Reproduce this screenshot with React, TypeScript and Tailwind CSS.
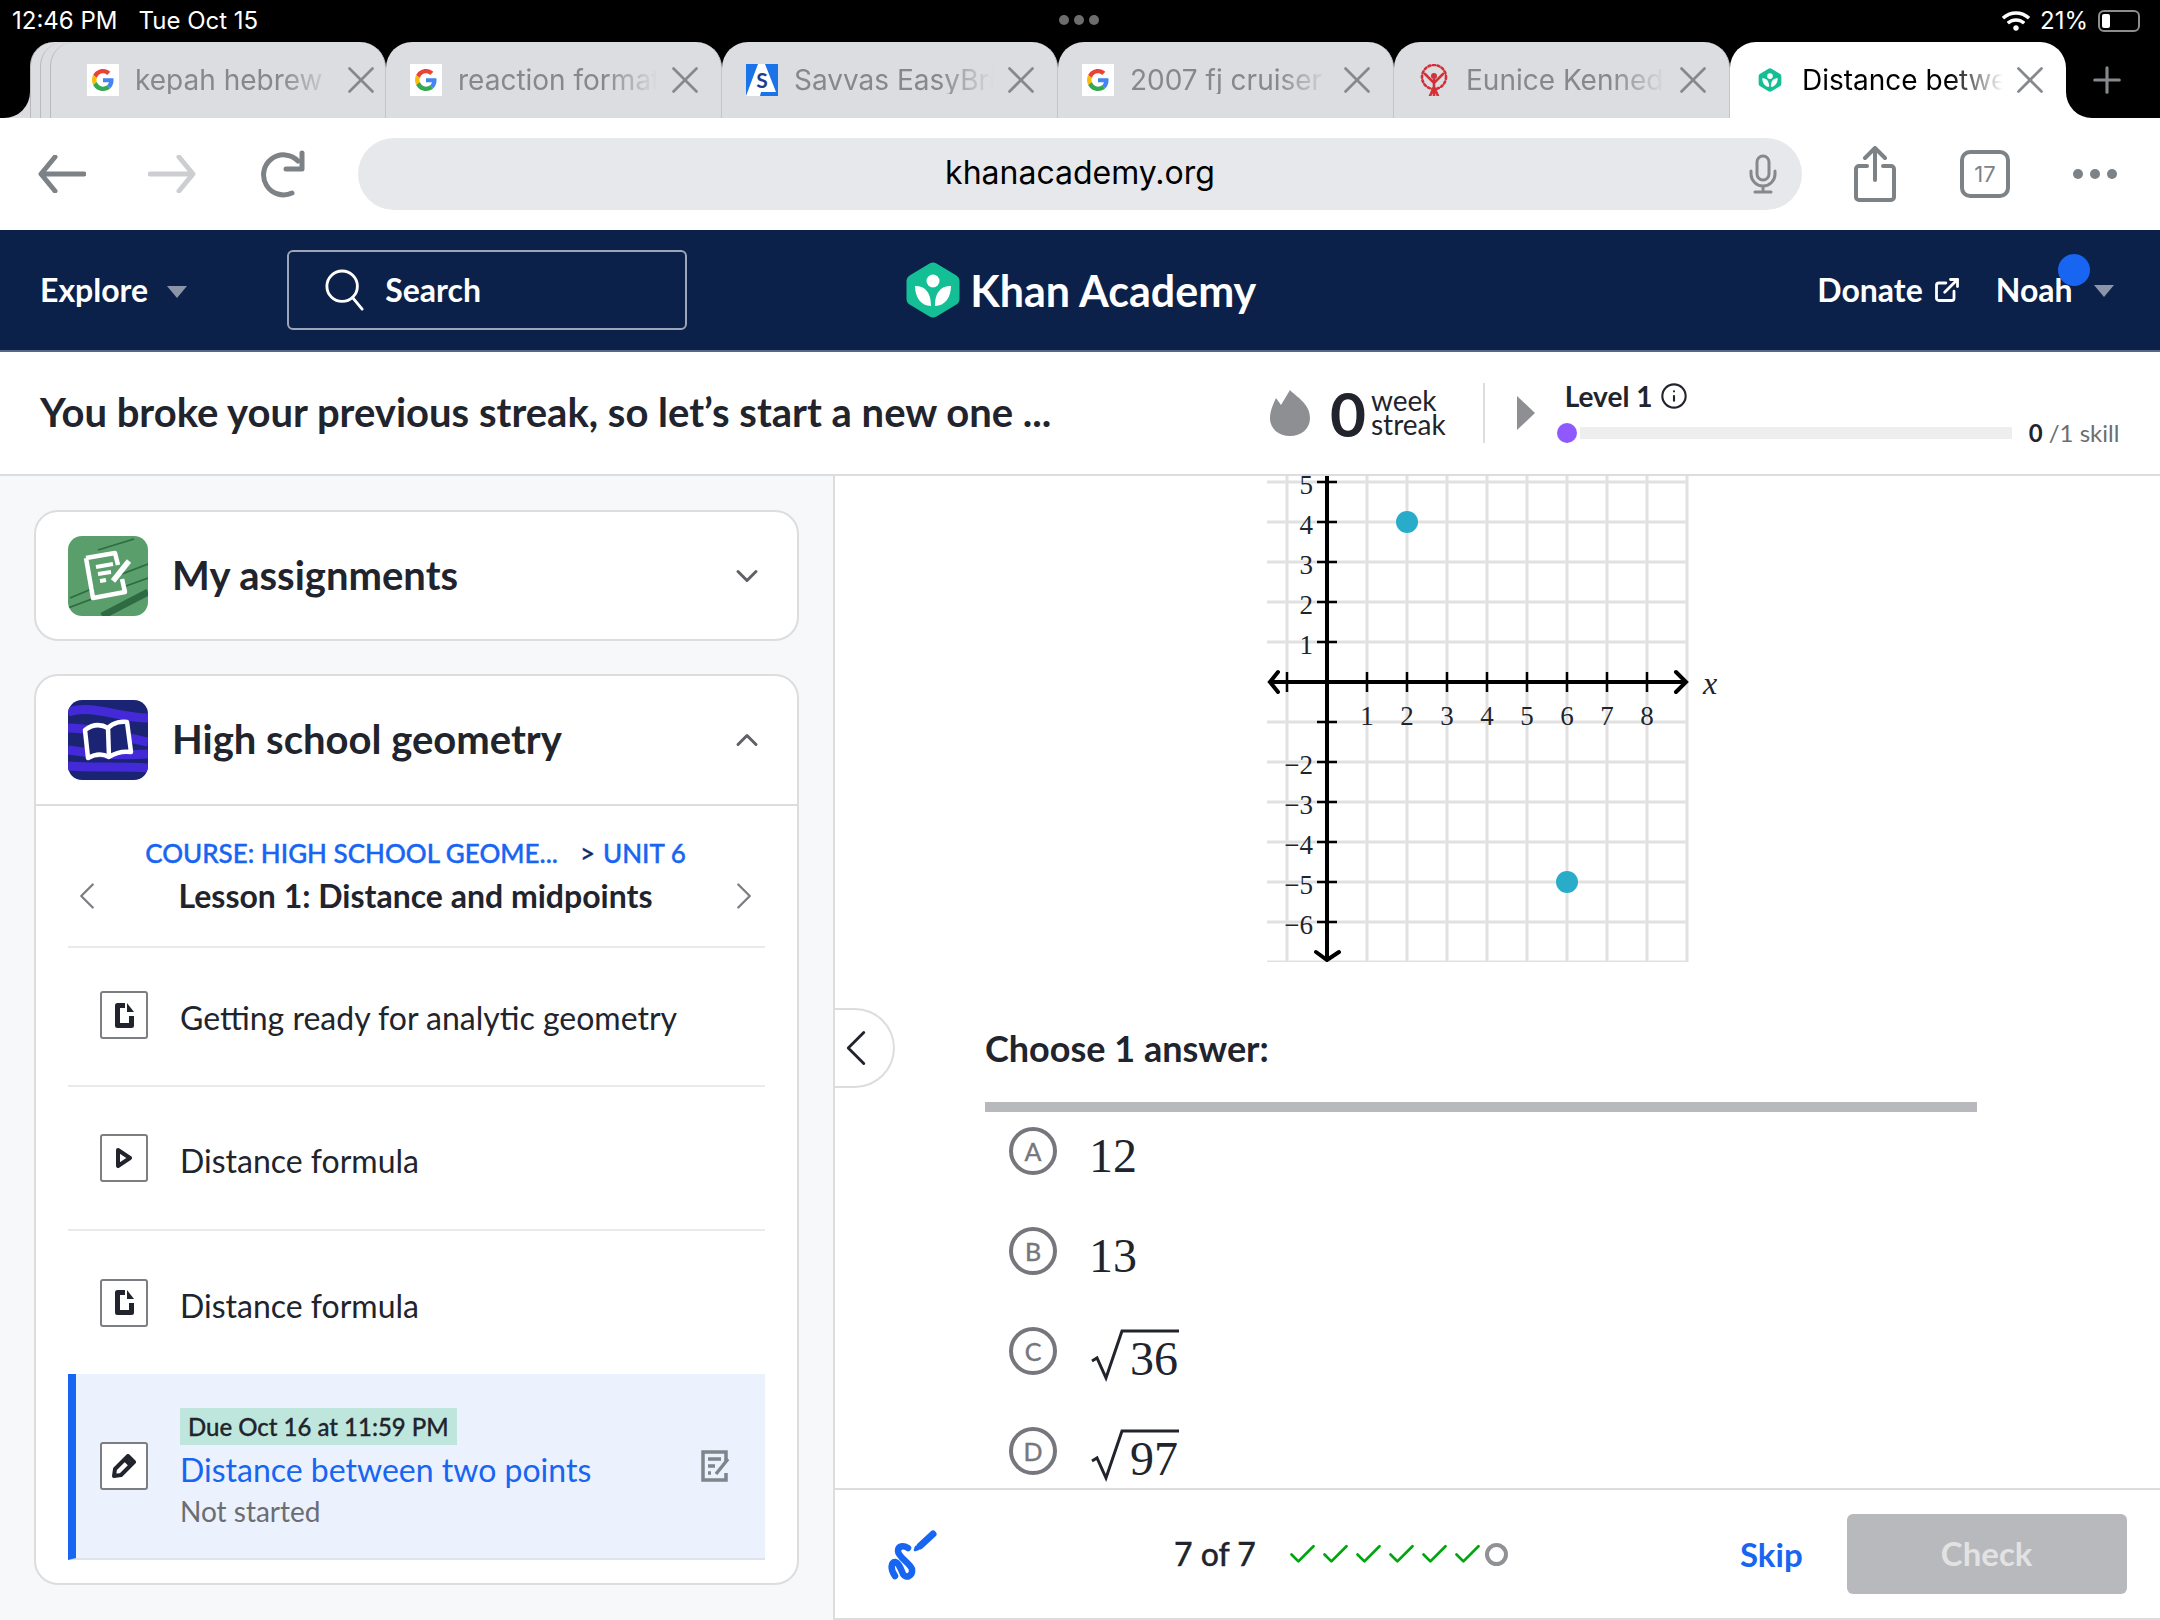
import { Check, ChevronDown, ChevronLeft, ChevronRight, ChevronUp, ExternalLink, Info, Plus, X } from "lucide-react";
import { FaWifi } from "react-icons/fa";

const tabs = [
  { title: "kepah hebrew - Google", icon: "google" },
  { title: "reaction format", icon: "google" },
  { title: "Savvas EasyBridge", icon: "savvas" },
  { title: "2007 fj cruiser", icon: "google" },
  { title: "Eunice Kennedy", icon: "olympics" },
  { title: "Distance between", icon: "khan", active: true },
];

const GoogleIcon = () => (
  <div className="flex h-8 w-8 shrink-0 items-center justify-center bg-white">
    <svg viewBox="0 0 48 48" className="h-[22px] w-[22px]">
      <path fill="#EA4335" d="M24 9.5c3.54 0 6.71 1.22 9.21 3.6l6.85-6.85C35.9 2.38 30.47 0 24 0 14.62 0 6.51 5.38 2.56 13.22l7.98 6.19C12.43 13.72 17.74 9.5 24 9.5z" />
      <path fill="#4285F4" d="M46.98 24.55c0-1.57-.15-3.09-.38-4.55H24v9.02h12.94c-.58 2.96-2.26 5.48-4.78 7.18l7.73 6c4.51-4.18 7.09-10.36 7.09-17.65z" />
      <path fill="#FBBC05" d="M10.53 28.59c-.48-1.45-.76-2.99-.76-4.59s.27-3.14.76-4.59l-7.98-6.19C.92 16.46 0 20.12 0 24c0 3.88.92 7.54 2.56 10.78l7.97-6.19z" />
      <path fill="#34A853" d="M24 48c6.48 0 11.93-2.13 15.89-5.81l-7.73-6c-2.15 1.45-4.92 2.3-8.16 2.3-6.26 0-11.57-4.22-13.47-9.91l-7.98 6.19C6.51 42.62 14.62 48 24 48z" />
    </svg>
  </div>
);

const SavvasIcon = () => (
  <svg viewBox="0 0 32 32" className="h-8 w-8 shrink-0">
    <rect width="32" height="32" fill="#1a73e8" />
    <path d="M12 0h7l11 28H15l-1 4H0z" fill="#fff" />
    <text x="16" y="24" textAnchor="middle" fontSize="21" fontWeight="700" fontFamily="'Lato', sans-serif" fill="#1c3d8f">
      S
    </text>
  </svg>
);

const OlympicsIcon = () => (
  <svg viewBox="0 0 32 32" className="h-8 w-8 shrink-0" fill="none" stroke="#d2303a" strokeLinecap="round">
    <circle cx="16" cy="12" r="3" fill="#d2303a" stroke="none" />
    <path strokeWidth="2.6" d="M7 10l9 9 9-9M16 16v16M12 32l4-9 4 9" />
    <circle cx="16" cy="13" r="12" strokeWidth="2.6" strokeDasharray="2 2.6" />
  </svg>
);

const KhanLogo = ({ className }: { className: string }) => (
  <svg viewBox="0 0 54 56" className={className}>
    <path d="M23.5 1.6a7 7 0 0 1 7 0l19.5 11.6a7 7 0 0 1 3.5 6v17.6a7 7 0 0 1-3.5 6L30.5 54.4a7 7 0 0 1-7 0L4 42.800a7 7 0 0 1-3.500-6V19.200a7 7 0 0 1 3.500-6z" fill="#14bf96" />
    <circle cx="27" cy="19" r="6.500" fill="#fff" />
    <path d="M9 24c9 0 16 5 16 20C15 44 9 35 9 24zM45 24c-9 0-16 5-16 20 10 0 16-9 16-20z" fill="#fff" />
  </svg>
);

const Favicon = ({ name }: { name: string }) => {
  if (name === "google") return <GoogleIcon />;
  if (name === "savvas") return <SavvasIcon />;
  if (name === "olympics") return <OlympicsIcon />;
  return (
    <div className="flex h-8 w-8 shrink-0 items-center justify-center">
      <KhanLogo className="h-6 w-6" />
    </div>
  );
};

const Tab = ({ title, icon, active, first }: { title: string; icon: string; active?: boolean; first?: boolean }) => (
  <div
    className={`relative flex h-full items-center rounded-t-[26px] ${first ? "w-[326px] pl-[27px] pr-[1px]" : "w-[336px] pl-[24px] pr-[13px]"} ${
      active ? "bg-white" : "border-r border-[#c3c4c8] bg-[#dcdde0]"
    }`}
  >
    <Favicon name={icon} />
    <span
      className={`ml-[16px] flex-1 overflow-hidden whitespace-nowrap text-[28px] leading-none [mask-image:linear-gradient(to_right,black_72%,transparent_98%)] ${
        active ? "text-black" : "text-[#85888d]"
      }`}
    >
      {title}
    </span>
    <X className="h-[46px] w-[46px] shrink-0 text-[#85888d]" strokeWidth={1.4} />
    {active && (
      <div className="absolute bottom-0 left-full h-[26px] w-[26px] bg-white">
        <div className="h-full w-full rounded-bl-[26px] bg-black" />
      </div>
    )}
  </div>
);

const BrowserChrome = () => (
  <div className="shrink-0 font-['Inter',sans-serif]">
    <div className="relative flex h-[42px] items-center justify-between bg-black pl-[12px] pr-[20px] text-[24px] text-white">
      <div className="flex gap-[21px]">
        <span>12:46 PM</span>
        <span>Tue Oct 15</span>
      </div>
      <div className="absolute left-[1059px] top-[15px] flex gap-[5px]">
        <div className="h-[10px] w-[10px] rounded-full bg-[#6d6d6d]" />
        <div className="h-[10px] w-[10px] rounded-full bg-[#6d6d6d]" />
        <div className="h-[10px] w-[10px] rounded-full bg-[#6d6d6d]" />
      </div>
      <div className="flex items-center gap-[10px]">
        <FaWifi className="h-[24px] w-[28px]" />
        <span>21%</span>
        <div className="flex h-[22px] w-[42px] items-center rounded-[6px] border-2 border-[#8d8d8d] p-[2px]">
          <div className="h-full w-[8px] rounded-[2px] bg-white" />
        </div>
      </div>
    </div>
    <div className="flex h-[76px] bg-black pl-[60px]">
      <div className="relative">
        <div className="absolute bottom-0 left-[-30px] top-0 w-[70px] rounded-tl-[24px] border-l border-[#b9babd] bg-[#dcdde0]" />
        <div className="absolute bottom-0 left-[-20px] top-0 w-[60px] rounded-tl-[24px] border-l border-[#b9babd] bg-[#dcdde0]" />
        <div className="absolute bottom-0 left-[-10px] top-0 w-[50px] rounded-tl-[24px] border-l border-[#b9babd] bg-[#dcdde0]" />
        <div className="absolute bottom-0 left-[-56px] h-[26px] w-[26px] bg-[#dcdde0]">
          <div className="h-full w-full rounded-br-[26px] bg-black" />
        </div>
      </div>
      <div className="relative flex h-full">
        {tabs.map((t, i) => (
          <Tab key={t.title} title={t.title} icon={t.icon} active={t.active} first={i === 0} />
        ))}
      </div>
      <Plus className="ml-[20px] mt-[17px] h-[42px] w-[42px] text-[#85888d]" strokeWidth={1.8} />
    </div>
    <div className="flex h-[112px] items-center bg-white pl-[38px]">
      <svg viewBox="0 0 48 38" className="h-[38px] w-[48px]" fill="none" stroke="#7d8287" strokeWidth="5" strokeLinecap="round" strokeLinejoin="round">
        <path d="M46 19H4M17 2L3 19l14 17" />
      </svg>
      <svg viewBox="0 0 48 38" className="ml-[62px] h-[38px] w-[48px]" fill="none" stroke="#ccced1" strokeWidth="5" strokeLinecap="round" strokeLinejoin="round">
        <path d="M2 19h42M31 2l14 17-14 17" />
      </svg>
      <svg viewBox="0 0 46 48" className="ml-[64px] h-[48px] w-[46px]" fill="none" stroke="#7d8287" strokeWidth="5" strokeLinecap="round" strokeLinejoin="round">
        <path d="M38 11a20 20 0 1 0-6 32" />
        <path d="M42 3v16H26" />
      </svg>
      <div className="relative ml-[52px] flex h-[72px] w-[1444px] items-center justify-center rounded-[36px] bg-[#e6e8eb] pb-[3px] text-[32px] text-black">
        khanacademy.org
        <svg viewBox="0 0 30 40" className="absolute right-[24px] top-[16px] h-[40px] w-[30px]" fill="none" stroke="#85888d" strokeWidth="3" strokeLinecap="round">
          <rect x="9" y="2" width="12" height="24" rx="6" />
          <path d="M3 17v3a12 12 0 0 0 24 0v-3M15 32v6M7 38h16" />
        </svg>
      </div>
      <svg viewBox="0 0 42 56" className="ml-[52px] h-[56px] w-[42px]" fill="none" stroke="#7d8287" strokeWidth="4" strokeLinecap="round" strokeLinejoin="round">
        <path d="M21 34V3M11 12l10-10 10 10M13 20H5a3 3 0 0 0-3 3v28a3 3 0 0 0 3 3h32a3 3 0 0 0 3-3V23a3 3 0 0 0-3-3h-8" />
      </svg>
      <div className="ml-[64px] flex h-[48px] w-[50px] items-center justify-center rounded-[10px] border-4 border-[#7d8287] text-[22px] text-[#7d8287]">
        17
      </div>
      <div className="ml-[63px] flex gap-[7px]">
        <div className="h-[10px] w-[10px] rounded-full bg-[#7d8287]" />
        <div className="h-[10px] w-[10px] rounded-full bg-[#7d8287]" />
        <div className="h-[10px] w-[10px] rounded-full bg-[#7d8287]" />
      </div>
    </div>
  </div>
);

const Caret = ({ className }: { className: string }) => (
  <svg viewBox="0 0 22 14" className={className}>
    <path d="M1 1h20L11 13z" fill="#8b94a8" />
  </svg>
);

const TopNav = () => (
  <div className="relative flex h-[122px] shrink-0 items-center border-b-2 border-[#56678a] bg-[#0b2149] pl-[40px] text-[32px] font-bold text-white">
    <span>Explore</span>
    <Caret className="ml-[18px] mt-[4px] h-[14px] w-[22px]" />
    <div className="ml-[99px] flex h-[80px] w-[400px] items-center rounded-[6px] border-2 border-[#9da6b6] pl-[36px]">
      <svg viewBox="0 0 42 44" className="h-[44px] w-[40px]" fill="none" stroke="#fff" strokeWidth="3" strokeLinecap="round">
        <circle cx="18" cy="18" r="16" />
        <path d="M29 30l10 12" />
      </svg>
      <span className="ml-[20px]">Search</span>
    </div>
    <KhanLogo className="ml-[219px] h-[56px] w-[54px]" />
    <span className="ml-[10px] text-[43px] leading-none">Khan Academy</span>
    <span className="ml-[561px]">Donate</span>
    <ExternalLink className="ml-[10px] h-[28px] w-[28px]" strokeWidth={2.4} />
    <span className="ml-[35px]">Noah</span>
    <Caret className="ml-[20px] mt-[2px] h-[14px] w-[22px]" />
    <div className="absolute left-[2058px] top-[24px] h-[32px] w-[32px] rounded-full bg-[#1865f2]" />
  </div>
);

const StreakBar = () => (
  <div className="flex h-[124px] shrink-0 items-center border-b-2 border-[#dcdddf] bg-white pl-[40px] text-[#21242c]">
    <span className="mb-[2px] w-[1230px] text-[40px] font-bold leading-none">You broke your previous streak, so let’s start a new one ...</span>
    <svg viewBox="0 0 40 46" className="h-[46px] w-[40px]">
      <path d="M20 0c5 6 20 13 20 28 0 11-9 18-20 18S0 39 0 28c0-7 3-13 6-20l5 7z" fill="#8e8f93" />
    </svg>
    <span className="ml-[20px] text-[62px] font-bold leading-none">0</span>
    <div className="mb-[2px] ml-[5px] flex flex-col text-[28px] leading-[24px]">
      <span>week</span>
      <span>streak</span>
    </div>
    <div className="ml-[37px] h-[60px] w-[2px] bg-[#dcdddf]" />
    <svg viewBox="0 0 18 34" className="ml-[32px] h-[34px] w-[18px]">
      <path d="M0 0l18 17L0 34z" fill="#8e8f93" />
    </svg>
    <div className="ml-[22px] mt-[6px] flex w-[580px] flex-col">
      <div className="ml-[8px] flex items-center text-[28px] font-bold leading-none">
        Level 1
        <Info className="ml-[8px] h-[28px] w-[28px]" strokeWidth={1.8} />
      </div>
      <div className="mt-[5px] flex items-center">
        <div className="h-[20px] w-[20px] rounded-full bg-[#9059ff]" />
        <div className="ml-[3px] h-[12px] w-[432px] bg-[#eeeeee]" />
        <span className="ml-[17px] whitespace-nowrap text-[24px] text-[#6b6d72]">
          <b className="text-[#21242c]">0</b> /1 skill
        </span>
      </div>
    </div>
  </div>
);

const AssignIcon = () => (
  <div className="h-[80px] w-[80px] shrink-0 overflow-hidden rounded-[14px] bg-[#5a9e6c]">
    <svg viewBox="0 0 80 80" className="h-full w-full" fill="none">
      <path d="M30 14L66 3M2 62l24-10M0 72l32-12M54 38l26-10M58 50l22-8" stroke="#2e6b42" strokeWidth="1.800" />
      <path d="M34 80l46-24" stroke="#2e6b42" strokeWidth="7" />
      <path d="M18 22l29-5 3 12M54 43l3 13-32 6-7-40" stroke="#fff" strokeWidth="4.500" strokeLinejoin="round" />
      <path d="M28 31l17-3M30 38l13-2M32 45l6-1" stroke="#fff" strokeWidth="4" />
      <path d="M61 25L45 45" stroke="#fff" strokeWidth="5.500" />
    </svg>
  </div>
);

const BookIcon = () => (
  <div className="h-[80px] w-[80px] shrink-0 overflow-hidden rounded-[14px] bg-[#1b2473]">
    <svg viewBox="0 0 80 80" className="h-full w-full" fill="none">
      <path d="M0 12c25-8 50 6 80 6M0 28c25 0 50 8 80 14M0 50c25 4 50 6 80 4M0 66c25 2 50 0 80 2" stroke="#4329d8" strokeWidth="9" />
      <path d="M17 30C25 24 33 24 40 28C46 22 54 21 59 22L63 52C55 51 47 53 41 57C34 53 27 54 20 58z" fill="#1b2473" stroke="#fff" strokeWidth="4.500" strokeLinejoin="round" />
      <path d="M40 28l1 29" stroke="#fff" strokeWidth="4.500" />
    </svg>
  </div>
);

const Accordion = ({ icon, title, open }: { icon: React.ReactNode; title: string; open?: boolean }) => (
  <div className={`flex h-[130px] items-center pl-[32px] pr-[32px] ${open ? "border-b-2 border-[#dcdddf]" : ""}`}>
    {icon}
    <span className="mb-[2px] ml-[24px] flex-1 text-[40px] font-bold leading-none text-[#21242c]">{title}</span>
    {open ? (
      <ChevronUp className="h-[36px] w-[36px] text-[#5f6167]" strokeWidth={2} />
    ) : (
      <ChevronDown className="h-[36px] w-[36px] text-[#5f6167]" strokeWidth={2} />
    )}
  </div>
);

const ArticleGlyph = () => (
  <svg viewBox="0 0 19 25" className="h-[25px] w-[19px]" fill="none">
    <path d="M10 2.500H2.500V22.500H16.500V13" stroke="#21242c" strokeWidth="5" strokeLinejoin="round" />
    <path d="M12 0l7 9h-7z" fill="#21242c" />
  </svg>
);

const PlayGlyph = () => (
  <svg viewBox="0 0 16 20" className="h-[20px] w-[16px]" fill="none">
    <path d="M2 2l12 8-12 8z" stroke="#21242c" strokeWidth="4" strokeLinejoin="round" />
  </svg>
);

const PencilGlyph = () => (
  <svg viewBox="0 0 24 24" className="h-[24px] w-[24px]" fill="none">
    <path d="M16 2l6 6-13 13-7 1 1-7z" stroke="#21242c" strokeWidth="4" strokeLinejoin="round" />
    <path d="M13 5l6 6" stroke="#21242c" strokeWidth="5" />
  </svg>
);

const LessonIcon = ({ children }: { children: React.ReactNode }) => (
  <div className="flex h-[48px] w-[48px] shrink-0 items-center justify-center rounded-[3px] border-2 border-[#7c7e82] bg-white">
    {children}
  </div>
);

const LessonRow = ({ icon, title, className }: { icon: React.ReactNode; title: string; className: string }) => (
  <div className={`flex items-center pl-[32px] ${className}`}>
    <LessonIcon>{icon}</LessonIcon>
    <span className="ml-[32px] mt-[6px] text-[32px] leading-none text-[#21242c]">{title}</span>
  </div>
);

const Sidebar = () => (
  <div className="flex w-[835px] shrink-0 flex-col border-r-2 border-[#dcdddf] bg-[#f7f8fa] pl-[34px] pr-[34px] pt-[34px] font-['Lato',sans-serif]">
    <div className="flex h-[131px] items-center rounded-[24px] border-2 border-[#dcdddf] bg-white">
      <div className="w-full">
        <Accordion icon={<AssignIcon />} title="My assignments" />
      </div>
    </div>
    <div className="mt-[33px] rounded-[24px] border-2 border-[#dcdddf] bg-white">
      <Accordion icon={<BookIcon />} title="High school geometry" open />
      <div className="pb-[23px] pl-[32px] pr-[32px]">
        <div className="flex h-[142px] items-center justify-between border-b-2 border-[#e9eaec]">
          <ChevronLeft className="ml-[-4px] mt-[40px] h-[46px] w-[46px] text-[#7c7e82]" strokeWidth={1.2} />
          <div className="flex flex-col items-center">
            <div className="flex text-[26px] font-medium leading-none text-[#1865f2] [-webkit-text-stroke:0.4px_#1865f2]">
              <span>COURSE: HIGH SCHOOL GEOME...</span>
              <span className="ml-[22px] text-[#21242c]">&gt;</span>
              <span className="ml-[8px]">UNIT 6</span>
            </div>
            <span className="mt-[14px] text-[32px] font-bold leading-none text-[#21242c]">Lesson 1: Distance and midpoints</span>
          </div>
          <ChevronRight className="mr-[-2px] mt-[40px] h-[46px] w-[46px] text-[#7c7e82]" strokeWidth={1.2} />
        </div>
        <LessonRow icon={<ArticleGlyph />} title="Getting ready for analytic geometry" className="h-[139px] border-b-2 border-[#e9eaec] pb-[3px]" />
        <LessonRow icon={<PlayGlyph />} title="Distance formula" className="h-[144px] border-b-2 border-[#e9eaec]" />
        <LessonRow icon={<ArticleGlyph />} title="Distance formula" className="h-[143px]" />
        <div className="flex h-[186px] items-center border-b-2 border-l-8 border-b-[#dfe3ea] border-l-[#1865f2] bg-[#ebf1fd] pl-[24px] pr-[34px]">
          <LessonIcon>
            <PencilGlyph />
          </LessonIcon>
          <div className="ml-[32px] flex flex-1 flex-col items-start">
            <span className="bg-[#bfe6dc] px-[8px] py-[6px] text-[24px] font-medium leading-[25px] text-[#21242c] [-webkit-text-stroke:0.3px_#21242c]">Due Oct 16 at 11:59 PM</span>
            <span className="mt-[9px] text-[32px] leading-none text-[#1865f2]">Distance between two points</span>
            <span className="mt-[11px] text-[28px] leading-none text-[#6b6d72]">Not started</span>
          </div>
          <svg viewBox="0 0 30 32" className="h-[32px] w-[30px]" fill="none" stroke="#80848b" strokeWidth="3.500">
            <path d="M25 12V2H2v28h23v-7" />
            <path d="M7 9h13M7 16h7M7 23h3M15 24l12-15" />
          </svg>
        </div>
      </div>
    </div>
  </div>
);

const gridX = [-1, 0, 1, 2, 3, 4, 5, 6, 7, 8, 9];
const gridY = [5, 4, 3, 2, 1, 0, -1, -2, -3, -4, -5, -6, -7];
const yLabels = [5, 4, 3, 2, 1, -2, -3, -4, -5, -6];
const xLabels = [1, 2, 3, 4, 5, 6, 7, 8];

// origin of the plot inside the svg, one unit is 40px
const ox = 67;
const oy = 206;

const Graph = () => (
  <svg viewBox="0 0 480 486" className="ml-[425px] h-[486px] w-[480px] shrink-0" fontFamily="'Liberation Serif', serif">
    {gridX.map((k) => (
      <line key={k} x1={ox + k * 40} x2={ox + k * 40} y1="0" y2="486" stroke="#e1e1e2" strokeWidth="3" />
    ))}
    {gridY.map((k) => (
      <line key={k} x1="7" x2="427" y1={oy - k * 40} y2={oy - k * 40} stroke="#e1e1e2" strokeWidth="3" />
    ))}
    <path d={`M${ox} 0V484M10 ${oy}H424`} stroke="#000" strokeWidth="4" fill="none" />
    <path d={`M18 ${oy - 10}L10 ${oy}L18 ${oy + 10}M416 ${oy - 10}L426 ${oy}L416 ${oy + 10}M${ox - 11} 476L${ox} 484L${ox + 12} 476`} stroke="#000" strokeWidth="4" strokeLinecap="round" fill="none" />
    {gridX.filter((k) => k !== 0 && k !== 9).map((k) => (
      <line key={k} x1={ox + k * 40} x2={ox + k * 40} y1={oy - 10} y2={oy + 10} stroke="#000" strokeWidth="2.500" />
    ))}
    {gridY.filter((k) => k !== 0 && k !== -7).map((k) => (
      <line key={k} x1={ox - 10} x2={ox + 10} y1={oy - k * 40} y2={oy - k * 40} stroke="#000" strokeWidth="2.500" />
    ))}
    {yLabels.map((k) => (
      <text key={k} x="53" y={oy - k * 40 + 12} textAnchor="end" fontSize="27" fill="#21242c">
        {k < 0 ? `\u2212${-k}` : k}
      </text>
    ))}
    {xLabels.map((k) => (
      <text key={k} x={ox + k * 40} y={oy + 43} textAnchor="middle" fontSize="27" fill="#21242c">
        {k}
      </text>
    ))}
    <text x="450" y={oy + 12} textAnchor="middle" fontSize="32" fontStyle="italic" fill="#21242c">
      x
    </text>
    <circle cx={ox + 80} cy={oy - 160} r="11" fill="#29abca" />
    <circle cx={ox + 240} cy={oy + 200} r="11" fill="#29abca" />
  </svg>
);

const Radical = ({ value }: { value: string }) => (
  <svg viewBox="0 0 90 54" className="ml-[2px] mt-[10px] h-[54px] w-[90px]" fontFamily="'Liberation Serif', serif">
    <path d="M1 32l5-3 9 20L31 2h57" fill="none" stroke="#21242c" strokeWidth="3" />
    <text x="39" y="46" fontSize="48" fill="#21242c">
      {value}
    </text>
  </svg>
);

const options = [
  { letter: "A", value: <span className="mt-[10px]">12</span> },
  { letter: "B", value: <span className="mt-[10px]">13</span> },
  { letter: "C", value: <Radical value="36" /> },
  { letter: "D", value: <Radical value="97" /> },
];

const Answers = () => (
  <div className="ml-[150px] w-[992px] font-['Lato',sans-serif]">
    <div className="mt-[65px] text-[36px] font-bold leading-[42px] text-[#21242c]">Choose 1 answer:</div>
    <div className="mt-[33px] h-[10px] bg-[#b8b9bc]" />
    <div className="mt-[15px] flex flex-col gap-[52px] pl-[24px]">
      {options.map((o) => (
        <div key={o.letter} className="flex h-[48px] items-center">
          <div className="flex h-[48px] w-[48px] shrink-0 items-center justify-center rounded-full border-4 border-[#75777c] text-[25px] leading-none text-[#75777c] [-webkit-text-stroke:0.4px_#75777c]">
            {o.letter}
          </div>
          <div className="ml-[32px] flex items-center font-['Liberation_Serif',serif] text-[48px] leading-none text-[#21242c]">{o.value}</div>
        </div>
      ))}
    </div>
  </div>
);

const Scribble = () => (
  <svg viewBox="0 0 70 70" className="h-[70px] w-[70px] shrink-0" fill="none" stroke="#1865f2" strokeLinecap="round" strokeLinejoin="round">
    <path d="M33 29C28 26 23 27 23 32C23 38 35 44 37 50C38 57 31 60 28 55C26 50 24 44 20 43C16 43 15 50 20 57" strokeWidth="6.500" />
    <path d="M58 15L45 27" strokeWidth="7" />
    <path d="M40 31l1-3 2 2z" strokeWidth="2.500" />
  </svg>
);

const Footer = () => (
  <div className="flex h-[132px] shrink-0 items-center border-y-2 border-[#dcdddf] pl-[40px] pr-[30px] font-['Lato',sans-serif]">
    <Scribble />
    <span className="ml-[229px] w-[80px] shrink-0 whitespace-nowrap text-[32px] font-medium leading-none text-[#21242c] [-webkit-text-stroke:0.3px_#21242c]">7 of 7</span>
    <div className="ml-[32px] flex shrink-0 items-center">
      {[0, 1, 2, 3, 4, 5].map((i) => (
        <Check key={i} className="h-[33px] w-[33px] text-[#00a60e]" strokeWidth={2} />
      ))}
      <div className="ml-[1px] h-[23px] w-[23px] rounded-full border-4 border-[#8f9195]" />
    </div>
    <span className="ml-[232px] text-[33px] font-bold leading-none text-[#1865f2]">Skip</span>
    <div className="ml-[44px] flex h-[80px] w-[280px] shrink-0 items-center justify-center rounded-[6px] bg-[#b8b9bc] text-[33px] font-bold text-white/60">
      Check
    </div>
  </div>
);

const MainPanel = () => (
  <div className="relative flex min-w-0 flex-1 flex-col bg-white">
    <div className="absolute left-0 top-[532px] flex h-[80px] w-[60px] items-center rounded-r-[40px] border-y-2 border-r-2 border-[#dcdddf] bg-white">
      <ChevronLeft className="ml-[-10px] h-[62px] w-[62px] text-[#21242c]" strokeWidth={1.1} />
    </div>
    <div className="min-h-0 flex-1 overflow-hidden">
      <Graph />
      <Answers />
    </div>
    <Footer />
  </div>
);

export default function App() {
  return (
    <div className="flex h-[1620px] w-[2160px] flex-col overflow-hidden bg-white">
      <BrowserChrome />
      <div className="flex min-h-0 flex-1 flex-col font-['Lato',sans-serif]">
        <TopNav />
        <StreakBar />
        <div className="flex min-h-0 flex-1">
          <Sidebar />
          <MainPanel />
        </div>
      </div>
    </div>
  );
}
